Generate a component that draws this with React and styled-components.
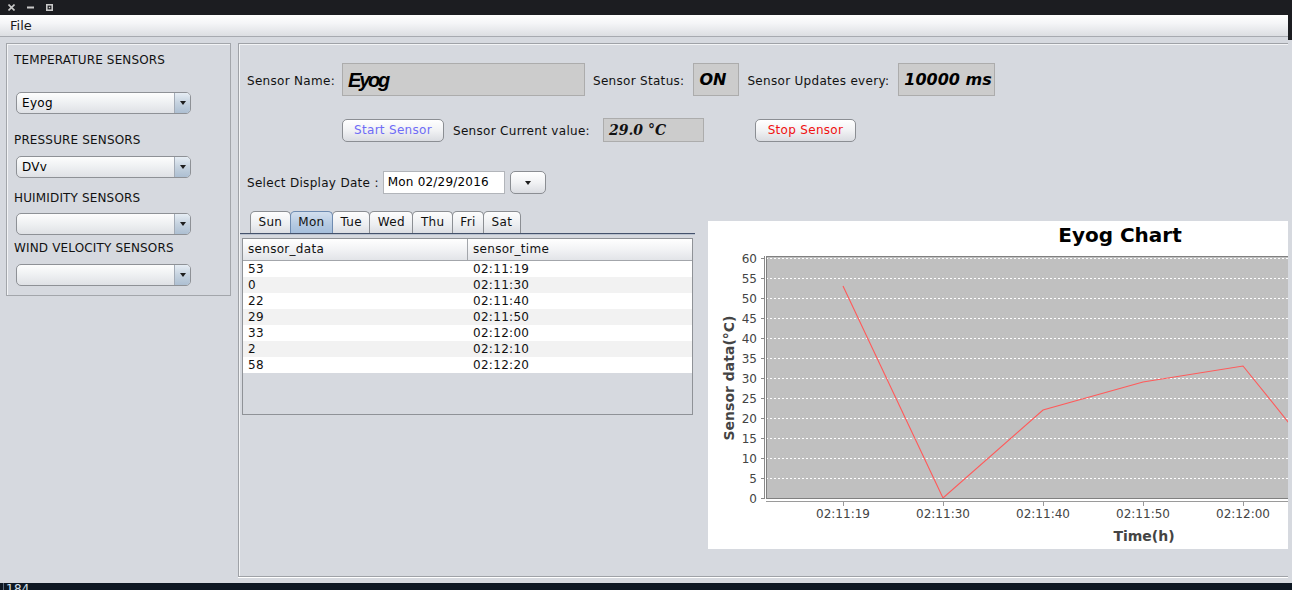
import React from "react";
import styled, { createGlobalStyle } from "styled-components";

const GlobalStyle = createGlobalStyle`
  html, body {
    margin: 0;
    padding: 0;
    width: 1292px;
    height: 590px;
    overflow: hidden;
    background: linear-gradient(#1c1d21 40px, #d6d9df 40px);
    font-family: "DejaVu Sans", "Liberation Sans", sans-serif;
    font-size: 12px;
    letter-spacing: 0.3px;
    color: #000;
  }
  * { box-sizing: border-box; }
`;

const days = ["Sun", "Mon", "Tue", "Wed", "Thu", "Fri", "Sat"];
const readings = [
  { data: 53, time: "02:11:19" },
  { data: 0, time: "02:11:30" },
  { data: 22, time: "02:11:40" },
  { data: 29, time: "02:11:50" },
  { data: 33, time: "02:12:00" },
  { data: 2, time: "02:12:10" },
  { data: 58, time: "02:12:20" },
];
const sensorGroups = [
  { title: "TEMPERATURE SENSORS", value: "Eyog", labelTop: 1, comboTop: 25 },
  { title: "PRESSURE SENSORS", value: "DVv", labelTop: 19, comboTop: 9 },
  { title: "HUIMIDITY SENSORS", value: "", labelTop: 13, comboTop: 8 },
  { title: "WIND VELOCITY SENSORS", value: "", labelTop: 6, comboTop: 9 },
];

function App() {
  return (
    <Page>
      <GlobalStyle />
      <Window>
        <TitleBar>
          <svg width="7" height="7" viewBox="0 0 7 7">
            <path d="M0.5 0.5 L6.5 6.5 M6.5 0.5 L0.5 6.5" stroke="#c9c9c9" strokeWidth="1.6" />
          </svg>
          <svg width="7" height="7" viewBox="0 0 7 7">
            <rect x="0" y="2.5" width="7" height="2" fill="#c9c9c9" />
          </svg>
          <svg width="7" height="7" viewBox="0 0 7 7">
            <rect x="0.8" y="0.8" width="5.4" height="5.4" fill="none" stroke="#c9c9c9" strokeWidth="1.6" />
            <rect x="2.8" y="2.8" width="1.4" height="1.4" fill="#c9c9c9" />
          </svg>
        </TitleBar>
        <MenuBar>
          <MenuItem>File</MenuItem>
        </MenuBar>
        <Content>
          <SidePanel>
            {sensorGroups.map((g) => (
              <React.Fragment key={g.title}>
                <GroupLabel $mt={g.labelTop}>{g.title}</GroupLabel>
                <Combo $mt={g.comboTop}>
                  <ComboText>{g.value}</ComboText>
                  <ComboArrow>
                    <Triangle />
                  </ComboArrow>
                </Combo>
              </React.Fragment>
            ))}
          </SidePanel>
          <MainPanel>
            <Row $mt={19} $pl={8} $h={33}>
              <Label $pt={3}>Sensor Name:</Label>
              <Field $w={243} $h={33} $ml={7}>
                <NameValue>Eyog</NameValue>
              </Field>
              <Label $pt={3} $ml={8}>Sensor Status:</Label>
              <Field $w={46} $h={33} $ml={9}>
                <BoldValue>ON</BoldValue>
              </Field>
              <Label $pt={3} $ml={8}>Sensor Updates every:</Label>
              <Field $w={97} $h={33} $ml={9}>
                <BoldValue>10000 ms</BoldValue>
              </Field>
            </Row>
            <Row $mt={22} $pl={103} $h={24}>
              <Button $w={102} $color="#6f6cf6">Start Sensor</Button>
              <Label $pt={1} $ml={9}>Sensor Current value:</Label>
              <Field $w={101} $h={24} $ml={13}>
                <SerifValue>29.0 °C</SerifValue>
              </Field>
              <Button $w={101} $ml={51} $color="#f01010">Stop Sensor</Button>
            </Row>
            <Row $mt={29} $pl={8} $h={23}>
              <Label>Select Display Date :</Label>
              <DateInput $ml={4}>Mon 02/29/2016</DateInput>
              <Button $w={36} $ml={5}>
                <Triangle />
              </Button>
            </Row>
            <Lower>
              <TableColumn>
                <TabStrip>
                  {days.map((d) => (
                    <Tab key={d} $active={d === "Mon"}>{d}</Tab>
                  ))}
                </TabStrip>
                <TabRule />
                <Table>
                  <TableHead>
                    <HeadCell>sensor_data</HeadCell>
                    <HeadCell>sensor_time</HeadCell>
                  </TableHead>
                  {readings.map((r, i) => (
                    <TableRow key={r.time} $alt={i % 2 === 1}>
                      <Cell>{r.data}</Cell>
                      <Cell>{r.time}</Cell>
                    </TableRow>
                  ))}
                </Table>
              </TableColumn>
              <ChartPanel>
                <SensorChart />
              </ChartPanel>
            </Lower>
          </MainPanel>
        </Content>
      </Window>
      <Taskbar>
        <TaskItem>184</TaskItem>
      </Taskbar>
    </Page>
  );
}

function SensorChart() {
  const plot = { x: 58, y: 35, w: 754, h: 242 };
  const yOf = (v) => 277 - v * 4;
  const xOf = (i) => 135 + i * 100;
  const ticks = [];
  for (let v = 0; v <= 60; v += 5) ticks.push(v);
  const points = readings.map((r, i) => `${xOf(i)},${yOf(r.data)}`).join(" ");

  return (
    <svg width="824" height="328" viewBox="0 0 824 328" style={{ letterSpacing: 0 }}>
      <defs>
        <clipPath id="plotClip">
          <rect x={plot.x} y={plot.y} width={plot.w} height={plot.h} />
        </clipPath>
      </defs>
      <text x="412" y="21" textAnchor="middle" fontFamily="DejaVu Sans" fontWeight="bold" fontSize="20" fill="#000">
        Eyog Chart
      </text>
      <rect x={plot.x} y={plot.y} width={plot.w} height={plot.h} fill="#c0c0c0" />
      {ticks.map((v) => (
        <line key={v} x1={plot.x} x2={plot.x + plot.w} y1={yOf(v) + 0.5} y2={yOf(v) + 0.5} stroke="#ffffff" strokeWidth="1" strokeDasharray="2 2" />
      ))}
      <rect x={plot.x + 0.5} y={plot.y + 0.5} width={plot.w} height={plot.h} fill="none" stroke="#808080" strokeWidth="1" />
      <line x1="56.5" x2="56.5" y1={plot.y} y2={plot.y + plot.h + 1} stroke="#8a8a8a" />
      {ticks.map((v) => (
        <g key={`y${v}`}>
          <line x1="53" x2="56" y1={yOf(v) + 0.5} y2={yOf(v) + 0.5} stroke="#8a8a8a" />
          <text x="49" y={yOf(v) + 5} textAnchor="end" fontFamily="DejaVu Sans" fontSize="12" fill="#444">
            {v}
          </text>
        </g>
      ))}
      <line x1={plot.x} x2={plot.x + plot.w} y1="280.5" y2="280.5" stroke="#9a9a9a" />
      {readings.map((r, i) => (
        <g key={r.time}>
          <line x1={xOf(i) + 0.5} x2={xOf(i) + 0.5} y1="281" y2="285" stroke="#9a9a9a" />
          <text x={xOf(i)} y="297" textAnchor="middle" fontFamily="DejaVu Sans" fontSize="12" fill="#444">
            {r.time}
          </text>
        </g>
      ))}
      <polyline points={points} fill="none" stroke="#ff5a5a" strokeWidth="1.1" clipPath="url(#plotClip)" />
      <text x="436" y="320" textAnchor="middle" fontFamily="DejaVu Sans" fontWeight="bold" fontSize="14" fill="#444">
        Time(h)
      </text>
      <text transform="translate(26 157) rotate(-90)" textAnchor="middle" fontFamily="DejaVu Sans" fontWeight="bold" fontSize="14" fill="#444">
        Sensor data(°C)
      </text>
    </svg>
  );
}

const Page = styled.div`
  width: 1292px;
  height: 590px;
  display: flex;
  flex-direction: column;
`;

const Window = styled.div`
  width: 1288px;
  height: 583px;
  flex-shrink: 0;
  display: flex;
  flex-direction: column;
  background: #d6d9df;
`;

const TitleBar = styled.div`
  height: 15px;
  flex-shrink: 0;
  background: #1c1d21;
  display: flex;
  align-items: center;
  gap: 12px;
  padding-left: 8px;
`;

const MenuBar = styled.div`
  height: 22px;
  flex-shrink: 0;
  background: linear-gradient(#ffffff, #f4f5f7 40%, #dcdee2);
  border-bottom: 1px solid #a7aab0;
  display: flex;
  align-items: center;
  padding-left: 10px;
`;

const MenuItem = styled.span`
  font-size: 13px;
  letter-spacing: 0;
  color: #1a1a1a;
`;

const Content = styled.div`
  flex: 1;
  display: flex;
  align-items: flex-start;
  gap: 7px;
  padding: 6px 0 0 6px;
`;

const SidePanel = styled.div`
  width: 225px;
  height: 253px;
  border: 1px solid #a3a6ab;
  box-shadow: inset 1px 1px 0 #f3f4f6;
  padding: 8px 0 0 7px;
  display: flex;
  flex-direction: column;
`;

const GroupLabel = styled.div`
  line-height: 14px;
  margin-top: ${(p) => p.$mt}px;
  letter-spacing: 0.15px;
  color: #111;
`;

const Combo = styled.div`
  width: 175px;
  height: 22px;
  margin-top: ${(p) => p.$mt}px;
  margin-left: 2px;
  border: 1px solid #8e9196;
  border-radius: 5px;
  background: linear-gradient(#fdfdfd, #eef0f2 50%, #dfe1e5);
  display: flex;
  overflow: hidden;
`;

const ComboText = styled.div`
  flex: 1;
  padding-left: 5px;
  line-height: 20px;
`;

const ComboArrow = styled.div`
  width: 16px;
  border-left: 1px solid #a3abb6;
  background: linear-gradient(#e6edf4, #c5d2df 50%, #adbfd2);
  display: flex;
  align-items: center;
  justify-content: center;
`;

const Triangle = styled.span`
  width: 0;
  height: 0;
  border-left: 3.5px solid transparent;
  border-right: 3.5px solid transparent;
  border-top: 4px solid #1e1e1e;
`;

const MainPanel = styled.div`
  flex: 1;
  height: 534px;
  border: 1px solid #9fa2a7;
  border-right: none;
  box-shadow: inset 1px 1px 0 #f3f4f6, 0 1px 0 #ffffff;
  display: flex;
  flex-direction: column;
  overflow: hidden;
`;

const Row = styled.div`
  display: flex;
  align-items: center;
  height: ${(p) => p.$h}px;
  margin-top: ${(p) => p.$mt}px;
  padding-left: ${(p) => p.$pl}px;
`;

const Label = styled.span`
  margin-left: ${(p) => p.$ml || 0}px;
  padding-top: ${(p) => p.$pt || 0}px;
  white-space: nowrap;
  color: #111;
`;

const Field = styled.div`
  width: ${(p) => p.$w}px;
  height: ${(p) => p.$h}px;
  margin-left: ${(p) => p.$ml || 0}px;
  background: #cccccc;
  border: 1px solid #acacac;
  display: flex;
  align-items: center;
  padding-left: 5px;
  white-space: nowrap;
  letter-spacing: 0;
`;

const NameValue = styled.span`
  font-family: "Liberation Sans", "DejaVu Sans", sans-serif;
  font-weight: bold;
  font-style: italic;
  font-size: 20px;
  letter-spacing: -2.2px;
  padding-top: 2px;
  color: #000;
`;

const BoldValue = styled.span`
  font-family: "DejaVu Sans", sans-serif;
  font-weight: bold;
  font-style: italic;
  font-size: 16px;
  color: #000;
`;

const SerifValue = styled.span`
  font-family: "DejaVu Serif", serif;
  font-weight: bold;
  font-style: italic;
  font-size: 14px;
  color: #111;
`;

const Button = styled.button`
  width: ${(p) => p.$w}px;
  height: 23px;
  margin-left: ${(p) => p.$ml || 0}px;
  padding: 0;
  border: 1px solid #8b8e93;
  border-radius: 5px;
  background: linear-gradient(#ffffff, #f1f2f4 50%, #dadce1);
  font-family: "DejaVu Sans", sans-serif;
  font-size: 12px;
  letter-spacing: 0.3px;
  color: ${(p) => p.$color || "#000"};
  display: flex;
  align-items: center;
  justify-content: center;
`;

const DateInput = styled.div`
  width: 122px;
  height: 23px;
  margin-left: ${(p) => p.$ml || 0}px;
  background: #fff;
  border: 1px solid #b2b5ba;
  padding-left: 4px;
  line-height: 21px;
  letter-spacing: 0.2px;
`;

const Lower = styled.div`
  display: flex;
  align-items: flex-start;
  margin-top: 17px;
  padding-left: 1px;
`;

const TableColumn = styled.div`
  width: 455px;
  display: flex;
  flex-direction: column;
`;

const TabStrip = styled.div`
  display: flex;
  height: 22px;
  padding-left: 10px;
`;

const Tab = styled.div`
  height: 22px;
  padding: 0 7.5px;
  margin-right: -1px;
  border: 1px solid ${(p) => (p.$active ? "#6e8bb0" : "#8b8e93")};
  border-bottom: none;
  border-radius: 5px 5px 0 0;
  background: ${(p) =>
    p.$active
      ? "linear-gradient(#d2dfee, #b4c9e1 60%, #a6bfdc)"
      : "linear-gradient(#fdfdfd, #eceef1 60%, #dcdee3)"};
  line-height: 21px;
  color: #111;
  position: relative;
  z-index: ${(p) => (p.$active ? 1 : 0)};
`;

const TabRule = styled.div`
  height: 1px;
  background: #44526c;
  box-shadow: 0 1px 0 #b9c1ce;
`;

const Table = styled.div`
  width: 451px;
  height: 177px;
  margin: 4px 0 0 2px;
  border: 1px solid #8f9297;
`;

const TableHead = styled.div`
  display: grid;
  grid-template-columns: 225px 1fr;
  height: 22px;
  background: linear-gradient(#ffffff, #f2f3f5 50%, #e2e4e8);
  border-bottom: 1px solid #a3a6ab;
`;

const HeadCell = styled.div`
  padding-left: 5px;
  line-height: 21px;
  border-right: 1px solid #a3a6ab;
  color: #111;

  &:last-child {
    border-right: none;
  }
`;

const TableRow = styled.div`
  display: grid;
  grid-template-columns: 225px 1fr;
  height: 16px;
  background: ${(p) => (p.$alt ? "#f2f2f2" : "#ffffff")};
`;

const Cell = styled.div`
  padding-left: 5px;
  line-height: 16px;
  color: #111;
`;

const ChartPanel = styled.div`
  flex: 1;
  height: 328px;
  margin: 10px 0 0 13px;
  background: #ffffff;
  overflow: hidden;
`;

const Taskbar = styled.div`
  flex: 1;
  background: #0e1722;
  display: flex;
  align-items: flex-start;
  overflow: hidden;
`;

const TaskItem = styled.div`
  margin-left: 3px;
  padding: 0 2px;
  border-left: 1px solid #5d6a7a;
  font-size: 12px;
  line-height: 13px;
  color: #d6e2ef;
`;

export default App;
